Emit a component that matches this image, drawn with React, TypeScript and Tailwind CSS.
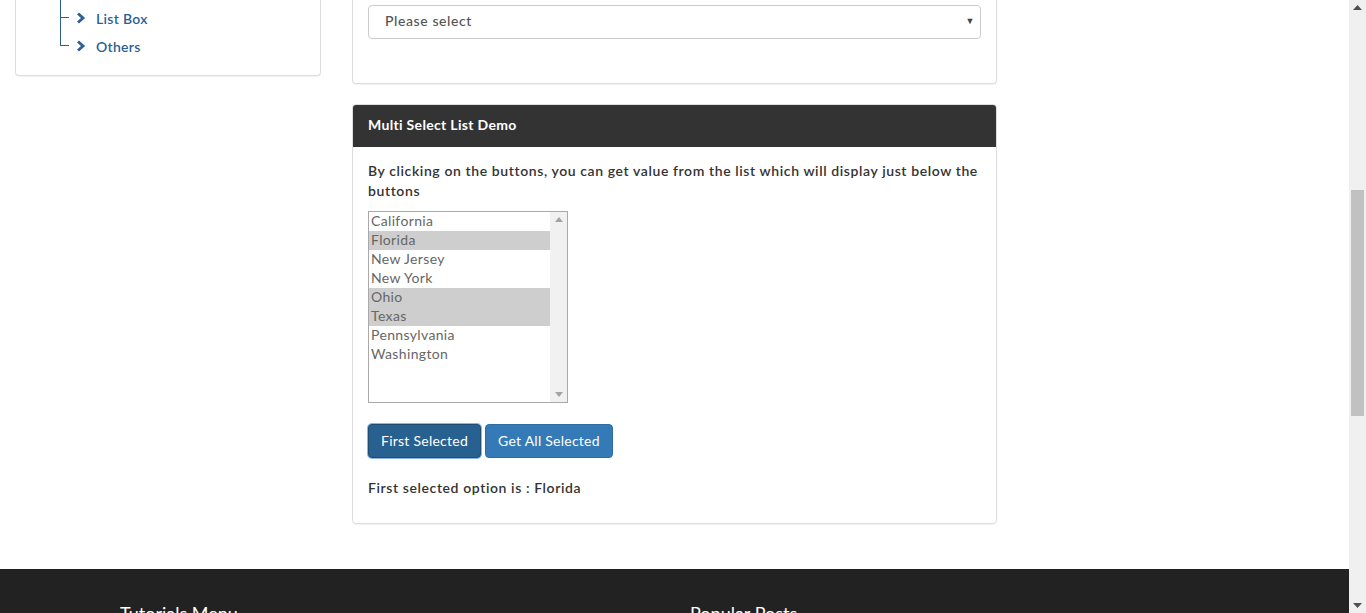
import React from "react";

const font = { fontFamily: "Lato, 'Open Sans', sans-serif" };

function Chevron() {
  return (
    <svg width="10" height="12" viewBox="0 0 10 12" className="shrink-0">
      <path d="M2 1.5 L7 6 L2 10.5" fill="none" stroke="#2b5f95" strokeWidth="2.8" strokeLinejoin="miter" />
    </svg>
  );
}

function TreeRow({ label, last }: { label: string; last?: boolean }) {
  return (
    <div className="flex h-[28px] items-stretch">
      <div className="flex w-[9px] flex-col">
        <div className="h-1/2 border-b border-l border-[#2b5f95]" />
        <div className={`h-1/2 ${last ? "" : "border-l border-[#2b5f95]"}`} />
      </div>
      <div className="ml-[7px] flex items-center gap-[10px]">
        <Chevron />
        <span className="text-[14px] font-semibold tracking-[0.3px] text-[#2b5f95]">{label}</span>
      </div>
    </div>
  );
}

const states = [
  { n: "California", s: false },
  { n: "Florida", s: true },
  { n: "New Jersey", s: false },
  { n: "New York", s: false },
  { n: "Ohio", s: true },
  { n: "Texas", s: true },
  { n: "Pennsylvania", s: false },
  { n: "Washington", s: false },
];

export default function App() {
  return (
    <div className="flex h-[613px] w-[1366px] overflow-hidden bg-white" style={font}>
      <div className="flex w-[1349px] flex-col">
        <div className="flex flex-1 pl-[15px]">
          {/* sidebar */}
          <div className="w-[306px]">
            <div className="h-[76px] rounded-b-[4px] border-x border-b border-[#ddd] pl-[44px] shadow-[0_1px_1px_rgba(0,0,0,0.05)]">
              <div className="h-[4px] w-[9px] border-l border-[#2b5f95]" />
              <TreeRow label="List Box" />
              <TreeRow label="Others" last />
            </div>
          </div>
          {/* middle */}
          <div className="ml-[31px] w-[645px]">
            <div className="h-[84px] rounded-b-[4px] border-x border-b border-[#ddd] px-[15px] pt-[5px] shadow-[0_1px_1px_rgba(0,0,0,0.05)]">
              <div className="flex h-[34px] items-center justify-between rounded-[4px] border border-[#ccc] pb-[4px] pl-[16px] pr-[5px] text-[14px] font-medium tracking-[0.6px] text-[#555]">
                <span>Please select</span>
                <span className="pt-[2px] text-[9px] text-[#444]">▼</span>
              </div>
            </div>
            <div className="mt-[20px] rounded-[4px] border border-[#ddd] shadow-[0_1px_1px_rgba(0,0,0,0.05)]">
              <div className="flex h-[42px] items-center rounded-t-[3px] bg-[#333] px-[15px] pb-[4px] text-[14px] font-bold tracking-[0.33px] text-white">
                Multi Select List Demo
              </div>
              <div className="px-[15px] pb-[25px] pt-[14px] text-[14px] text-[#333]">
                <p className="font-semibold leading-[20px] tracking-[0.6px]">
                  By clicking on the buttons, you can get value from the list which will display just below the buttons
                </p>
                <div className="mt-[10px] flex h-[192px] w-[200px] border border-[#a9a9a9]">
                  <div className="flex-1">
                    {states.map((s) => (
                      <div
                        key={s.n}
                        className={`h-[19px] pl-[2px] text-[14px] leading-[18px] tracking-[0.35px] text-[#666] ${s.s ? "bg-[#cecece]" : ""}`}
                      >
                        {s.n}
                      </div>
                    ))}
                  </div>
                  <div className="flex w-[17px] flex-col items-center justify-between bg-[#f1f1f1] py-[5px]">
                    <svg width="8" height="5" viewBox="0 0 8 5"><path d="M4 0 L8 5 L0 5 Z" fill="#a3a3a3" /></svg>
                    <svg width="8" height="5" viewBox="0 0 8 5"><path d="M0 0 L8 0 L4 5 Z" fill="#a3a3a3" /></svg>
                  </div>
                </div>
                <div className="mt-[21px] flex gap-[4px]">
                  <button className="h-[34px] rounded-[4px] border border-[#204d74] bg-[#286090] px-[12px] pb-[2px] text-[14px] tracking-[0.25px] text-white shadow-[0_0_0_1px_#8db5e6]">
                    First Selected
                  </button>
                  <button className="h-[34px] rounded-[4px] border border-[#2e6da4] bg-[#337ab7] px-[12px] pb-[2px] text-[14px] tracking-[0.25px] text-white">
                    Get All Selected
                  </button>
                </div>
                <p className="mt-[20px] font-semibold leading-[20px] tracking-[0.6px]">First selected option is : Florida</p>
              </div>
            </div>
          </div>
        </div>
        <div className="flex h-[44px] bg-[#222] pl-[120px] pt-[33px] text-[18px] leading-[22px] text-white">
          <div className="w-[570px]">Tutorials Menu</div>
          <div>Popular Posts</div>
        </div>
      </div>
      {/* page scrollbar */}
      <div className="flex w-[17px] flex-col items-center bg-[#f0f0f0]">
        <svg className="mt-[5px]" width="9" height="5" viewBox="0 0 9 5"><path d="M4.5 0 L9 5 L0 5 Z" fill="#505050" /></svg>
        <div className="mt-[180px] h-[226px] w-[13px] bg-[#c1c1c1]" />
        <div className="flex-1" />
        <svg className="mb-[5px]" width="9" height="5" viewBox="0 0 9 5"><path d="M0 0 L9 0 L4.5 5 Z" fill="#505050" /></svg>
      </div>
    </div>
  );
}
